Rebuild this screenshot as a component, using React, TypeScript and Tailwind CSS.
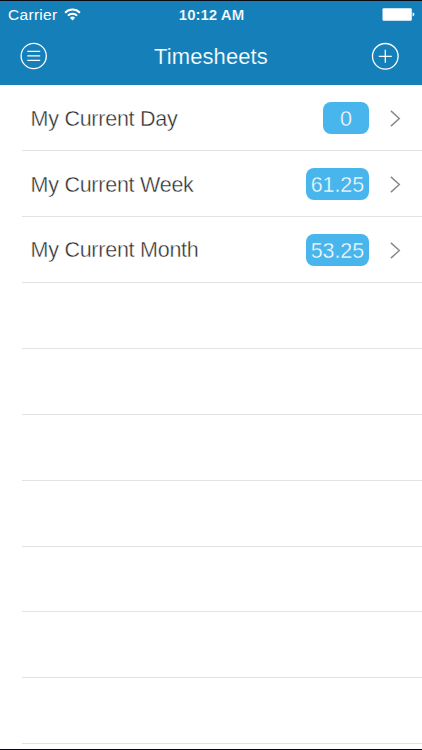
import React from "react";

interface TimesheetRowProp {
  label?: string;
  value?: string;
}

const rows: TimesheetRowProp[] = [
  { label: "My Current Day", value: "0" },
  { label: "My Current Week", value: "61.25" },
  { label: "My Current Month", value: "53.25" },
  {},
  {},
  {},
  {},
  {},
  {},
  {},
];

const StatusBar: React.FC = () => (
  <div className="grid grid-cols-3 items-center h-[28px] pl-2 pr-[7px] text-[15.5px]">
    <div className="flex items-center gap-[7px]">
      <span className="tracking-[0.3px]">Carrier</span>
      <svg className="-mt-[2px]" width="17" height="13" viewBox="0 0 17 13" fill="none" stroke="white" strokeWidth="2">
        <path d="M1.1 4.7a10.4 10.4 0 0 1 14.8 0" />
        <path d="M3.9 7.6a6.5 6.5 0 0 1 9.2 0" />
        <path d="M8.5 12.4 5.9 9.8a3.7 3.7 0 0 1 5.2 0z" fill="white" stroke="none" />
      </svg>
    </div>
    <span className="text-center font-bold text-[15px] whitespace-nowrap [-webkit-text-stroke:0.2px_#147fb8]">
      10:12 AM
    </span>
    <svg className="justify-self-end -mt-[2px]" width="33" height="13" viewBox="0 0 33 13" fill="white">
      <rect x="0.5" y="0.3" width="29.3" height="12.4" rx="1.2" />
      <path d="M30.6 4.6c2.4.4 2.4 3.4 0 3.8z" />
    </svg>
  </div>
);

const NavBar: React.FC = () => (
  <div className="flex items-center justify-between h-[54px] pl-5 pr-[23px]">
    <svg width="28" height="28" viewBox="0 0 28 28" fill="none" stroke="white" strokeWidth="1.3">
      <circle cx="13.7" cy="14" r="12.6" />
      <path d="M7.3 9.4h12.9M7.3 13.9h12.9M7.3 18.4h12.9" />
    </svg>
    <h1 className="text-[22px] leading-none tracking-[0.1px] mt-[2px] ml-[3px] [-webkit-text-stroke:0.2px_#147fb8]">Timesheets</h1>
    <svg width="28" height="28" viewBox="0 0 28 28" fill="none" stroke="white" strokeWidth="1.3">
      <circle cx="14.3" cy="14.3" r="12.8" />
      <path d="M7.8 14.3h13M14.3 7.8v13" />
    </svg>
  </div>
);

const TimesheetRow: React.FC<TimesheetRowProp> = ({ label, value }) => (
  <li className="flex items-center h-[65.9px] shrink-0 ml-[22px] pl-[8.5px] pr-[21px] pt-[2px] border-b border-[#e2e2e2]">
    {label && (
      <>
        <span className="flex-1 text-[21.5px] text-[#2b2b2b] tracking-[-0.25px] [-webkit-text-stroke:0.4px_white]">
          {label}
        </span>
        <span className="flex items-center justify-center h-8 min-w-[46px] -mt-[2px] px-[5px] pt-[3px] rounded-[8px] bg-[#48b5ec] text-white text-[21.5px] tracking-[-0.1px] [-webkit-text-stroke:0.4px_#48b5ec]">
          {value}
        </span>
        <svg className="ml-[21px]" width="11" height="17" viewBox="0 0 11 17" fill="none" stroke="#8a8a8a" strokeWidth="1.5">
          <path d="M0.9 0.9 9.3 8.5 0.9 16.1" />
        </svg>
      </>
    )}
  </li>
);

const App: React.FC = () => {
  return (
    <div
      className="flex flex-col w-[422px] h-[750px] overflow-hidden bg-white border-y border-[#0b0b14]"
      style={{ fontFamily: '"Liberation Sans", Arial, sans-serif' }}
    >
      <header className="h-[84.3px] shrink-0 bg-[#147fb8] text-white">
        <StatusBar />
        <NavBar />
      </header>
      <ul className="flex flex-col">
        {rows.map((row, i) => (
          <TimesheetRow key={i} {...row} />
        ))}
      </ul>
    </div>
  );
};

export default App;
